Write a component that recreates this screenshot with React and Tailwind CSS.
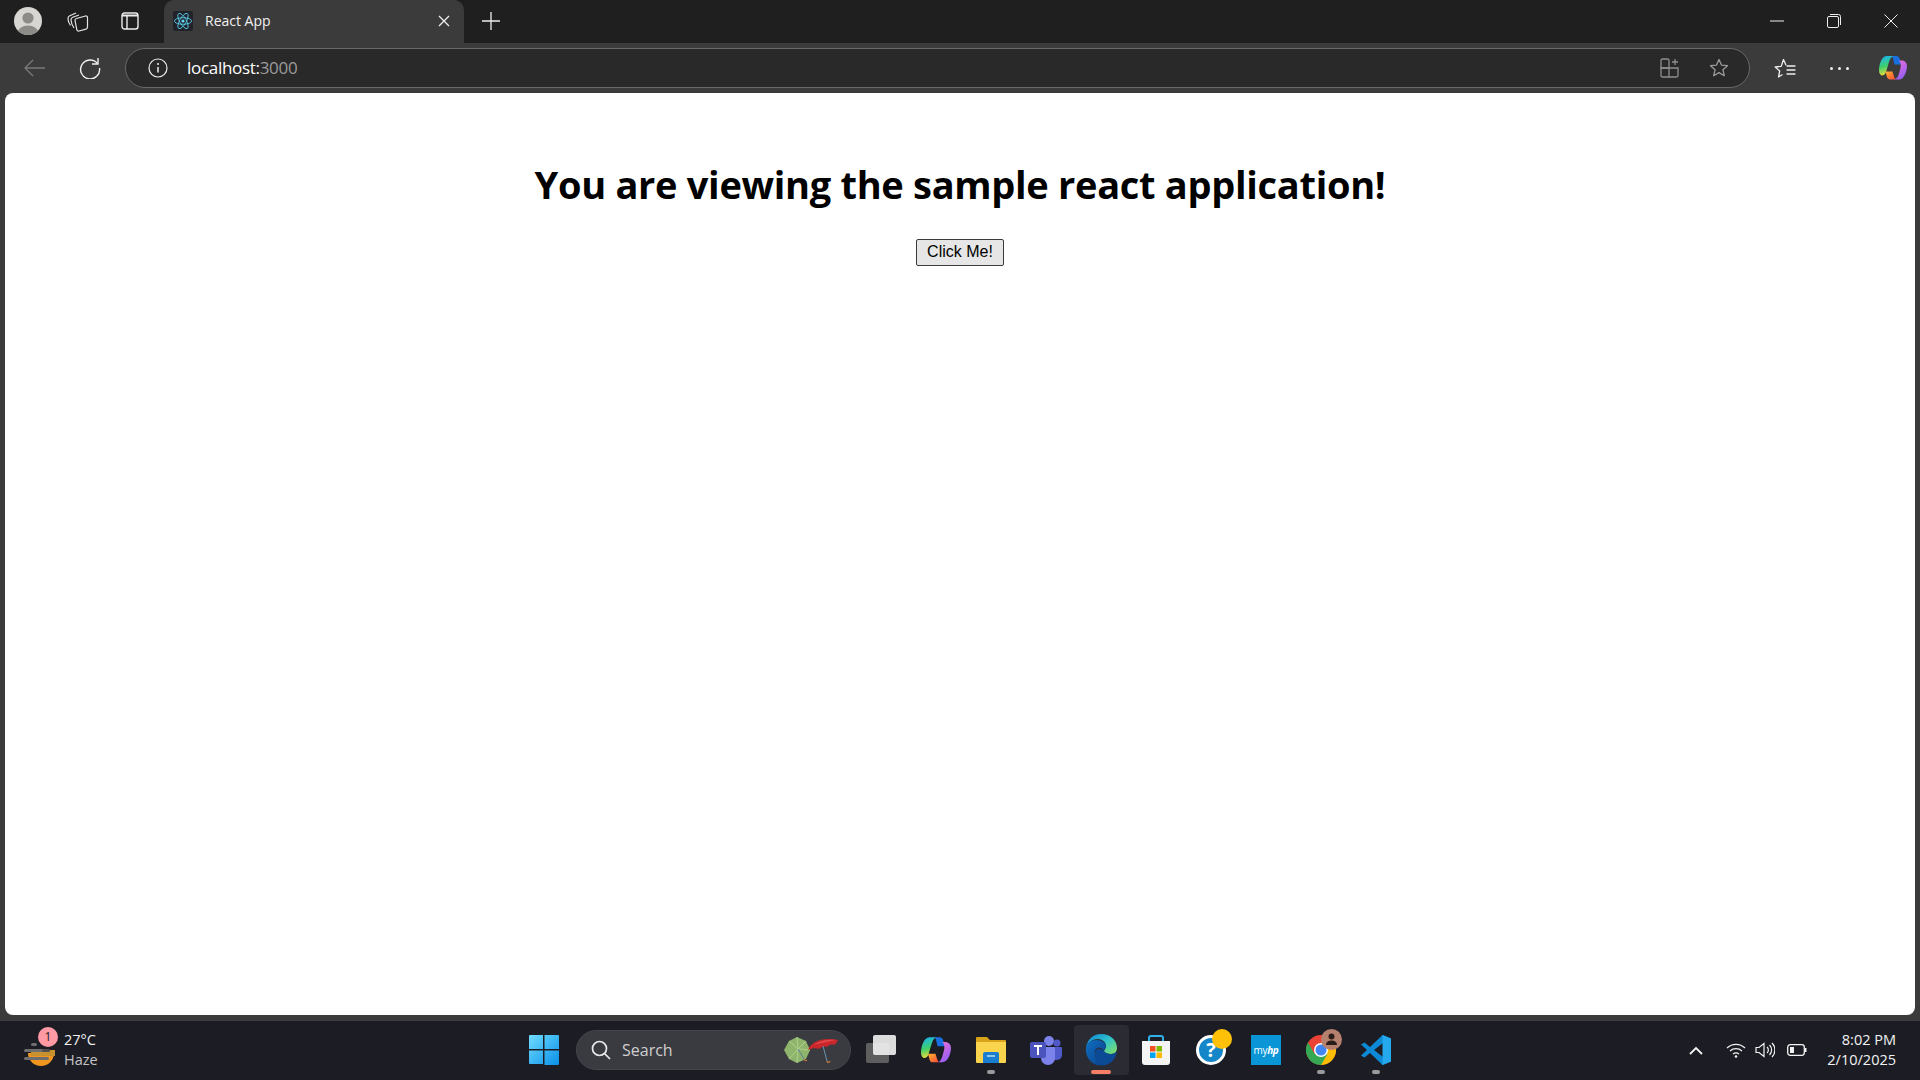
import React from 'react';

const uiFont = "font-['Open_Sans','Noto_Sans',sans-serif]";

function Avatar() {
  return (
    <svg width="28" height="28" viewBox="0 0 28 28">
      <defs><clipPath id="av"><circle cx="14" cy="14" r="14" /></clipPath></defs>
      <g clipPath="url(#av)">
        <rect width="28" height="28" fill="#d8d6d2" />
        <circle cx="14" cy="11" r="5.6" fill="#8d8b88" />
        <ellipse cx="14" cy="26" rx="10.5" ry="7.5" fill="#8d8b88" />
      </g>
    </svg>
  );
}

function CollectionsIcon() {
  return (
    <svg width="22" height="22" viewBox="0 0 22 22" fill="none" stroke="#e4e4e4" strokeWidth="1.2" strokeLinejoin="round">
      <path d="M3.500 15.500C2 13.500 1 11 1 8.500c0-1.300.7-2.200 1.800-2.700L9 3" />
      <path d="M7 18C5.500 16 4.200 13 4 10c-.1-1.300.6-2.200 1.800-2.700L12 5" />
      <path d="M9.500 8.500 18.500 6c1-.3 2 .5 2 1.500v9.500c0 1-.6 1.900-1.600 2.200L12 21c-1 .3-2-.4-2.200-1.400L8 10.500c-.1-.9.500-1.800 1.500-2Z" />
    </svg>
  );
}

function TabActionsIcon() {
  return (
    <svg width="18" height="18" viewBox="0 0 18 18" fill="none" stroke="#ececec" strokeWidth="1.4">
      <rect x="1" y="1" width="16" height="16" rx="2.5" />
      <path d="M6 4v13" />
      <path d="M1 2.5h16v2H1z" fill="#ececec" stroke="none" />
    </svg>
  );
}

function ReactFavicon() {
  return (
    <span className="flex h-5 w-5 items-center justify-center rounded-[2px] bg-[#20232a]">
      <svg width="18" height="18" viewBox="-11.5 -10.23 23 20.46" fill="none" stroke="#61dafb" strokeWidth="1">
        <circle r="2.05" fill="#61dafb" stroke="none" />
        <ellipse rx="11" ry="4.2" />
        <ellipse rx="11" ry="4.2" transform="rotate(60)" />
        <ellipse rx="11" ry="4.2" transform="rotate(120)" />
      </svg>
    </span>
  );
}

function TitleBar() {
  return (
    <div className={`flex h-[43px] shrink-0 items-stretch bg-[#1f1f1f] ${uiFont}`}>
      <div className="flex w-[56px] items-center justify-center pb-[1px]"><Avatar /></div>
      <div className="flex w-[42px] items-center justify-center pb-[1px] pl-[1px]"><CollectionsIcon /></div>
      <div className="flex w-[64px] items-center justify-center pb-[1px]"><TabActionsIcon /></div>
      <div className="ml-[2px] flex w-[300px] items-center rounded-t-[10px] bg-[#3b3b3b] pb-[1px] pl-[9px] pr-[14px]">
        <ReactFavicon />
        <span className="ml-[12px] flex-1 pb-[2px] text-[14px] text-[#f2f2f2]">React App</span>
        <svg width="12" height="12" viewBox="0 0 12 12" stroke="#eeeeee" strokeWidth="1.3"><path d="M1 1l10 10M11 1 1 11" /></svg>
      </div>
      <div className="flex w-[54px] items-center justify-center pb-[1px]">
        <svg width="18" height="18" viewBox="0 0 18 18" stroke="#eeeeee" strokeWidth="1.3"><path d="M9 0v18M0 9h18" /></svg>
      </div>
      <div className="flex-1" />
      <div className="flex w-[57px] items-center justify-center pb-[1px]">
        <svg width="14" height="2" viewBox="0 0 14 2" stroke="#eeeeee"><path d="M0 1h14" /></svg>
      </div>
      <div className="flex w-[57px] items-center justify-center pb-[1px]">
        <svg width="14" height="14" viewBox="0 0 14 14" fill="none" stroke="#eeeeee">
          <rect x=".5" y="2.5" width="11" height="11" rx="1.5" />
          <path d="M3 .5h8.500a2 2 0 0 1 2 2V11" />
        </svg>
      </div>
      <div className="flex w-[58px] items-center justify-center pb-[1px]">
        <svg width="14" height="14" viewBox="0 0 14 14" stroke="#eeeeee"><path d="M.5.5l13 13M13.500.5l-13 13" /></svg>
      </div>
    </div>
  );
}

function Star({ size = 20, color = '#9a9a9a' }) {
  return (
    <svg width={size} height={size} viewBox="0 0 20 20" fill="none" stroke={color} strokeWidth="1.3" strokeLinejoin="round">
      <path d="M10 1.500l2.500 5.600 6 .6-4.600 4 1.400 6L10 14.600 4.700 17.700l1.400-6-4.600-4 6-.6z" />
    </svg>
  );
}

function AppsPlusIcon() {
  return (
    <svg width="20" height="20" viewBox="0 0 20 20" fill="none" stroke="#8e8e8e" strokeWidth="1.3">
      <path d="M2.500 1h5A1.500 1.500 0 0 1 9 2.500V10H1V2.500A1.500 1.500 0 0 1 2.500 1Z" />
      <path d="M1 10h8v9H2.500A1.500 1.500 0 0 1 1 17.500ZM9 10h9v7.500a1.500 1.500 0 0 1-1.500 1.500H9Z" />
      <path d="M15 1v6M12 4h6" />
    </svg>
  );
}

function FavoritesIcon() {
  return (
    <svg width="22" height="22" viewBox="0 0 22 22" fill="none" stroke="#eeeeee" strokeWidth="1.3" strokeLinejoin="round">
      <path d="M8.500 17.500 4.500 20l1.200-6-4.500-4 6-.6L9.500 2.500l2.500 5.700" />
      <path d="M13 9h8M13 13h8M13 17h8" strokeLinecap="round" />
    </svg>
  );
}

function CopilotIcon({ size = 28, id = 'cp' }) {
  return (
    <svg width={size} height={size} viewBox="0 0 28 28">
      <defs>
        <linearGradient id={`${id}a`} x1="0.2" y1="0" x2="0.4" y2="1">
          <stop offset="0" stopColor="#19b5f0" />
          <stop offset="0.55" stopColor="#3fd06a" />
          <stop offset="1" stopColor="#f0dc3c" />
        </linearGradient>
        <linearGradient id={`${id}b`} x1="0.2" y1="0" x2="0.8" y2="1">
          <stop offset="0" stopColor="#ef6fd8" />
          <stop offset="1" stopColor="#8a5cf5" />
        </linearGradient>
        <linearGradient id={`${id}c`} x1="0" y1="0" x2="1" y2="1">
          <stop offset="0" stopColor="#ffb52e" />
          <stop offset="1" stopColor="#f5483a" />
        </linearGradient>
      </defs>
      <path d="M13 2h4.500c1.500 0 2.500 1 3 2.500l2 6h-7l-1.500-6c-.3-1-.5-2-1-2.500Z" fill="#1a6fe0" />
      <path d="M8 2h7c-3 .5-4 3-5 6l-3 10c-.8 2.400-2 3.400-4 3.400C1.500 21.400 0 19.500 0 16.500 0 10 3 2 8 2Z" fill={`url(#${id}a)`} />
      <path d="M6.500 17.500h7l1.500 5c.4 1.200 1 2 1.500 3H11c-1.500 0-2.500-1-3-2.500Z" fill={`url(#${id}c)`} />
      <path d="M20 6.500h2.500c3 0 5.500 2 5.500 5.500 0 5.500-3 13.500-8 13.500h-5c3-.5 4-3 5-6l1.500-5.500c.6-2.500.5-5.500-1.500-7.500Z" fill={`url(#${id}b)`} />
    </svg>
  );
}

function Toolbar() {
  return (
    <div className={`flex h-[50px] shrink-0 items-center bg-[#3b3b3b] ${uiFont}`}>
      <div className="flex w-[70px] justify-center">
        <svg width="22" height="18" viewBox="0 0 22 18" fill="none" stroke="#7a7a7a" strokeWidth="1.3"><path d="M21 9H1M9 1 1 9l8 8" /></svg>
      </div>
      <div className="flex w-[39px] justify-center pb-[1px]">
        <svg width="22" height="22" viewBox="0 0 22 22" fill="none" stroke="#f0f0f0" strokeWidth="1.4">
          <path d="M18.500 6.500A9.500 9.500 0 1 0 20.500 11" />
          <path d="M19 1v6h-6" />
        </svg>
      </div>
      <div className="ml-[16px] flex h-[40px] w-[1625px] items-center rounded-[20px] border border-[#686868] bg-[#292929] pl-[22px] pr-[20px]">
        <svg width="20" height="20" viewBox="0 0 20 20" fill="none" stroke="#eeeeee" strokeWidth="1.2">
          <circle cx="10" cy="10" r="9" />
          <path d="M10 9v5.500" strokeWidth="1.500" />
          <circle cx="10" cy="6" r="1" fill="#eeeeee" stroke="none" />
        </svg>
        <span className="ml-[19px] flex-1 text-[17px] tracking-[-0.3px]">
          <span className="text-white">localhost:</span>
          <span className="text-[#9b9b9b]">3000</span>
        </span>
        <AppsPlusIcon />
        <span className="ml-[29px]"><Star /></span>
      </div>
      <div className="ml-[24px]"><FavoritesIcon /></div>
      <div className="ml-[34px] flex gap-[3px]">
        <span className="h-[3px] w-[3px] rounded-full bg-[#eeeeee]" />
        <span className="ml-[2px] h-[3px] w-[3px] rounded-full bg-[#eeeeee]" />
        <span className="ml-[2px] h-[3px] w-[3px] rounded-full bg-[#eeeeee]" />
      </div>
      <div className="ml-[30px]"><CopilotIcon id="cpa" /></div>
    </div>
  );
}

function PageContent() {
  return (
    <div className="mx-[5px] flex h-[922px] shrink-0 flex-col items-center rounded-[8px] bg-white pt-[65px]">
      <h1 className="font-['Open_Sans',sans-serif] text-[38px] font-bold leading-[52px] tracking-[-0.3px] text-black">
        You are viewing the sample react application!
      </h1>
      <button className="mt-[29px] h-[27px] rounded-[2px] border border-[#3b3b3b] bg-[#e6e6e6] px-[10px] pb-[2px] font-['Liberation_Sans',sans-serif] text-[16px] text-black">
        Click Me!
      </button>
    </div>
  );
}

function WeatherIcon() {
  return (
    <span className="relative block h-[36px] w-[36px]">
      <svg width="36" height="36" viewBox="0 0 36 36">
        <path d="M6 21a13 13 0 0 0 26 0Z" transform="translate(-1 0)" fill="#f0961e" />
        <path d="M8 18h24v6H8z" fill="#c9912e" />
        <rect x="8" y="11" width="6" height="3" rx="1.500" fill="#6e6e6e" />
        <rect x="1" y="17" width="24" height="3" rx="1.500" fill="#6e6e6e" />
        <rect x="19" y="17" width="8" height="3" rx="1.500" fill="#4f4f4f" />
        <rect x="1" y="25" width="25" height="3" rx="1.500" fill="#6e6e6e" />
      </svg>
      <span className="absolute left-[15px] top-[-5px] flex h-[20px] w-[20px] items-center justify-center rounded-full bg-[#ff99a4] font-['Open_Sans',sans-serif] text-[12px] text-[#1c1c1c]">1</span>
    </span>
  );
}

function StartIcon() {
  return (
    <svg width="30" height="30" viewBox="0 0 30 30">
      <defs>
        <linearGradient id="win" x1="0" y1="0" x2="1" y2="1">
          <stop offset="0" stopColor="#6fdcff" />
          <stop offset="1" stopColor="#0a8fe8" />
        </linearGradient>
      </defs>
      <path d="M1 0h13v14H0V1a1 1 0 0 1 1-1ZM15.500 0H29a1 1 0 0 1 1 1v13H15.500ZM0 15.500h14V29H1a1 1 0 0 1-1-1ZM15.500 15.500H30V29a1 1 0 0 1-1 1H15.500Z" fill="url(#win)" />
    </svg>
  );
}

function UmbrellaIcons() {
  return (
    <svg width="56" height="28" viewBox="0 0 56 28">
      <path d="M13 1l9 4 4 9-4 9-9 4-8-4-5-9 5-9Z" fill="#8fb56c" />
      <path d="M13 1l1 12 12 1M14 13 5 23M14 13l-1 14M14 13 5 5M14 13l8-8" stroke="#b9d596" strokeWidth=".8" fill="none" />
      <path d="M14 13l6 10" stroke="#5f7f9a" strokeWidth="1" />
      <path d="M20 23c.4 2 2 2 3 1" stroke="#b8713c" strokeWidth="1.200" fill="none" />
      <path d="M24 14C27 6 38 1 54 4c-1 2-2 4-4 5-3-1-5 0-7 2-3-1-6 0-8 2-3-1-7-1-11 1Z" fill="#c8262a" />
      <path d="M30 9C35 5 43 3 52 4c-6 1-15 3-22 5Z" fill="#e2474a" />
      <path d="M39 10l4 15" stroke="#6b93b0" strokeWidth="1" />
      <path d="M43 25c.4 2 2 2 3 0" stroke="#b8713c" strokeWidth="1.500" fill="none" />
    </svg>
  );
}

function TaskViewIcon() {
  return (
    <span className="relative block h-[30px] w-[30px]">
      <span className="absolute left-0 top-[8px] h-[20px] w-[23px] rounded-[2px] bg-[#5e5e5e]" />
      <span className="absolute left-[7px] top-0 h-[20px] w-[23px] rounded-[2px] bg-[#f2f2f2] opacity-90" />
    </span>
  );
}

function ExplorerIcon() {
  return (
    <svg width="30" height="30" viewBox="0 0 30 30">
      <path d="M0 3a1 1 0 0 1 1-1h10l3 3h15a1 1 0 0 1 1 1v3H0Z" fill="#d9a21b" />
      <path d="M0 7h30v20a1 1 0 0 1-1 1H1a1 1 0 0 1-1-1Z" fill="#fbd44e" />
      <path d="M7 19a2 2 0 0 1 2-2h12a2 2 0 0 1 2 2v9H7Z" fill="#1a7ed0" />
      <path d="M11 21h8" stroke="#b9e0fa" strokeWidth="1.500" />
    </svg>
  );
}

function TeamsIcon() {
  return (
    <svg width="32" height="30" viewBox="0 0 32 30">
      <circle cx="19" cy="6" r="5" fill="#7b83eb" />
      <circle cx="27" cy="8" r="3.500" fill="#5059c9" />
      <path d="M22 12h9a1 1 0 0 1 1 1v7a5 5 0 0 1-5 5h-5Z" fill="#5059c9" />
      <path d="M9 12h15a1 1 0 0 1 1 1v10a7 7 0 0 1-14 0Z" fill="#7b83eb" />
      <rect x="0" y="7" width="16" height="16" rx="2" fill="#4b53bc" />
      <path d="M4 11h8M8 11v9" stroke="#fff" strokeWidth="2" />
    </svg>
  );
}

function EdgeIcon() {
  return (
    <svg width="32" height="32" viewBox="0 0 32 32">
      <defs>
        <linearGradient id="edgeA" x1="0.1" y1="0.1" x2="1" y2="0.9">
          <stop offset="0" stopColor="#0f8ed8" />
          <stop offset="0.5" stopColor="#32c4c8" />
          <stop offset="1" stopColor="#7fe06a" />
        </linearGradient>
        <linearGradient id="edgeB" x1="0" y1="0" x2="1" y2="1">
          <stop offset="0" stopColor="#0f6fc4" />
          <stop offset="1" stopColor="#0a3f86" />
        </linearGradient>
      </defs>
      <path d="M1 14C2 6 8 0 16 0c9 0 16 6 16 14 0 3-2 6-6 6-3 0-7-1-7-3 0-1 2-2 2-5 0-4-4-7-8-7-6 0-11 4-12 9Z" fill="url(#edgeA)" />
      <path d="M1 14c0-5 5-8 11-8 5 0 9 3 9 6 0 2-2 3-2 5-3-5-8-4-9 0-1 5 2 10 8 13 1 .5 2 1 3 1C8 34 0 24 1 14Z" fill="url(#edgeB)" />
      <path d="M19 31c-5-2-9-6-9-12 0-4 5-6 9-2 1 2 4 3 7 3 3 0 5-1 6-3-1 7-6 14-13 14Z" fill="#0c4a96" />
    </svg>
  );
}

function StoreIcon() {
  return (
    <svg width="30" height="30" viewBox="0 0 30 30">
      <path d="M8 6V3a2 2 0 0 1 2-2h10a2 2 0 0 1 2 2v3" fill="none" stroke="#2fb0e8" strokeWidth="2" />
      <path d="M1 6h28v21a3 3 0 0 1-3 3H4a3 3 0 0 1-3-3Z" fill="#f4f4f4" />
      <rect x="9" y="11" width="5.500" height="5.500" fill="#f25022" />
      <rect x="15.500" y="11" width="5.500" height="5.500" fill="#7fba00" />
      <rect x="9" y="17.500" width="5.500" height="5.500" fill="#00a4ef" />
      <rect x="15.500" y="17.500" width="5.500" height="5.500" fill="#ffb900" />
    </svg>
  );
}

function HelpIcon() {
  return (
    <span className="relative block h-[30px] w-[30px]">
      <span className="flex h-[30px] w-[30px] items-center justify-center rounded-full border-[3px] border-white bg-[#1587c9] font-['Open_Sans',sans-serif] text-[20px] font-bold leading-none text-white">?</span>
      <span className="absolute left-[16px] top-[-6px] h-[20px] w-[20px] rounded-full bg-[#ffc107]" />
    </span>
  );
}

function MyHpIcon() {
  return (
    <span className="flex h-[30px] w-[30px] items-center justify-center bg-[#0a96d6] font-['Open_Sans',sans-serif] text-[10px] leading-none tracking-[-0.3px] text-white">
      my<span className="italic font-bold">hp</span>
    </span>
  );
}

function ChromeIcon() {
  return (
    <span className="relative block h-[30px] w-[30px]">
      <svg width="30" height="30" viewBox="0 0 30 30">
        <circle cx="15" cy="15" r="15" fill="#ea4335" />
        <path d="M15 30A15 15 0 0 0 28 7.500H15l-1 22.500Z" fill="#fbbc04" />
        <path d="M2 7.500A15 15 0 0 0 15 30l6.500-11.300L8.500 18.700Z" fill="#34a853" />
        <circle cx="15" cy="15" r="7" fill="#fff" />
        <circle cx="15" cy="15" r="5.500" fill="#4285f4" />
      </svg>
      <span className="absolute left-[15px] top-[-6px] flex h-[21px] w-[21px] items-center justify-center rounded-full bg-[#b5806e]">
        <svg width="13" height="13" viewBox="0 0 13 13" fill="#2a1c18">
          <circle cx="6.500" cy="3.500" r="3" />
          <path d="M1 12c0-3 2-4.500 5.500-4.500S12 9 12 12Z" />
        </svg>
      </span>
    </span>
  );
}

function VsCodeIcon() {
  return (
    <svg width="30" height="30" viewBox="0 0 30 30">
      <path d="M21.500 0 30 3.500v23L21.500 30 9 18l-5.500 4.500L0 20.500 6 15 0 9.500l3.500-2L9 12Z" fill="#0d8ad6" />
      <path d="M22 8 13 15l9 7Z" fill="#1e1f27" />
      <path d="M21.500 0 30 3.500v23L21.500 30Z" fill="#24a8ee" />
    </svg>
  );
}

function TaskbarSlot({ children, dot, active }) {
  return (
    <div className={`relative flex h-[50px] w-[55px] items-center justify-center ${active ? 'rounded-[4px] bg-[#2b2c33]' : ''}`}>
      {children}
      {dot && <span className="absolute bottom-[1px] left-1/2 h-[4px] w-[8px] -translate-x-1/2 rounded-full bg-[#9a9a9a]" />}
      {active && <span className="absolute bottom-[1px] left-1/2 h-[4px] w-[20px] -translate-x-1/2 rounded-full bg-[#f47e66]" />}
    </div>
  );
}

function Taskbar() {
  return (
    <div className={`mt-[6px] flex h-[59px] shrink-0 items-center bg-[#1c1d24] pb-[1px] ${uiFont}`}>
      <div className="flex w-[519px] items-center pl-[23px]">
        <WeatherIcon />
        <div className="ml-[5px] flex flex-col text-[14.5px] leading-[20px]">
          <span className="text-[#f2f2f2]">27°C</span>
          <span className="text-[#c4c4c4]">Haze</span>
        </div>
      </div>
      <div className="flex w-[50px] justify-center"><StartIcon /></div>
      <div className="ml-[7px] flex h-[40px] w-[275px] items-center rounded-[20px] border border-[#44454c] bg-[#3a3b41] pl-[14px] pr-[10px]">
        <svg width="20" height="20" viewBox="0 0 20 20" fill="none" stroke="#eaeaea" strokeWidth="1.700"><circle cx="8.500" cy="8.500" r="7" /><path d="M13.500 13.500 19 19" /></svg>
        <span className="ml-[11px] flex-1 text-[16px] text-[#cfcfcf]">Search</span>
        <UmbrellaIcons />
      </div>
      <div className="ml-[2.500px] flex">
        <TaskbarSlot><TaskViewIcon /></TaskbarSlot>
        <TaskbarSlot><CopilotIcon size={30} id="cpb" /></TaskbarSlot>
        <TaskbarSlot dot><ExplorerIcon /></TaskbarSlot>
        <TaskbarSlot><TeamsIcon /></TaskbarSlot>
        <TaskbarSlot active><EdgeIcon /></TaskbarSlot>
        <TaskbarSlot><StoreIcon /></TaskbarSlot>
        <TaskbarSlot><HelpIcon /></TaskbarSlot>
        <TaskbarSlot><MyHpIcon /></TaskbarSlot>
        <TaskbarSlot dot><ChromeIcon /></TaskbarSlot>
        <TaskbarSlot dot><VsCodeIcon /></TaskbarSlot>
      </div>
      <div className="flex flex-1 items-center justify-end pr-[24px]">
        <svg width="14" height="9" viewBox="0 0 14 9" fill="none" stroke="#f2f2f2" strokeWidth="1.800"><path d="M1 8l6-6 6 6" /></svg>
        <svg className="ml-[23px]" width="20" height="16" viewBox="0 0 20 16" fill="none" stroke="#f2f2f2" strokeWidth="1.300">
          <path d="M1 6a13 13 0 0 1 18 0M4 9a9 9 0 0 1 12 0M7 12a5 5 0 0 1 6 0" />
          <circle cx="10" cy="14.500" r="1.300" fill="#f2f2f2" stroke="none" />
        </svg>
        <svg className="ml-[9px]" width="20" height="16" viewBox="0 0 20 16" fill="none" stroke="#f2f2f2" strokeWidth="1.200">
          <path d="M1 5.500h3L9 1.500v13l-5-4H1Z" />
          <path d="M12 5a4 4 0 0 1 0 6M14.500 3a7 7 0 0 1 0 10M17 1a10 10 0 0 1 0 14" />
        </svg>
        <svg className="ml-[12px]" width="20" height="12" viewBox="0 0 20 12" fill="none" stroke="#f2f2f2" strokeWidth="1.300">
          <rect x=".7" y=".7" width="16.600" height="10.600" rx="2.500" />
          <rect x="3" y="3" width="4" height="6" fill="#f2f2f2" stroke="none" />
          <path d="M18.500 4v4" strokeWidth="2" />
        </svg>
        <div className="ml-[20px] flex flex-col items-end text-[14.5px] leading-[20px] text-[#f2f2f2]">
          <span>8:02 PM</span>
          <span>2/10/2025</span>
        </div>
      </div>
    </div>
  );
}

export default function App() {
  return (
    <div className="flex h-[1080px] w-[1920px] flex-col overflow-hidden bg-[#3b3b3b]">
      <TitleBar />
      <Toolbar />
      <PageContent />
      <Taskbar />
    </div>
  );
}
